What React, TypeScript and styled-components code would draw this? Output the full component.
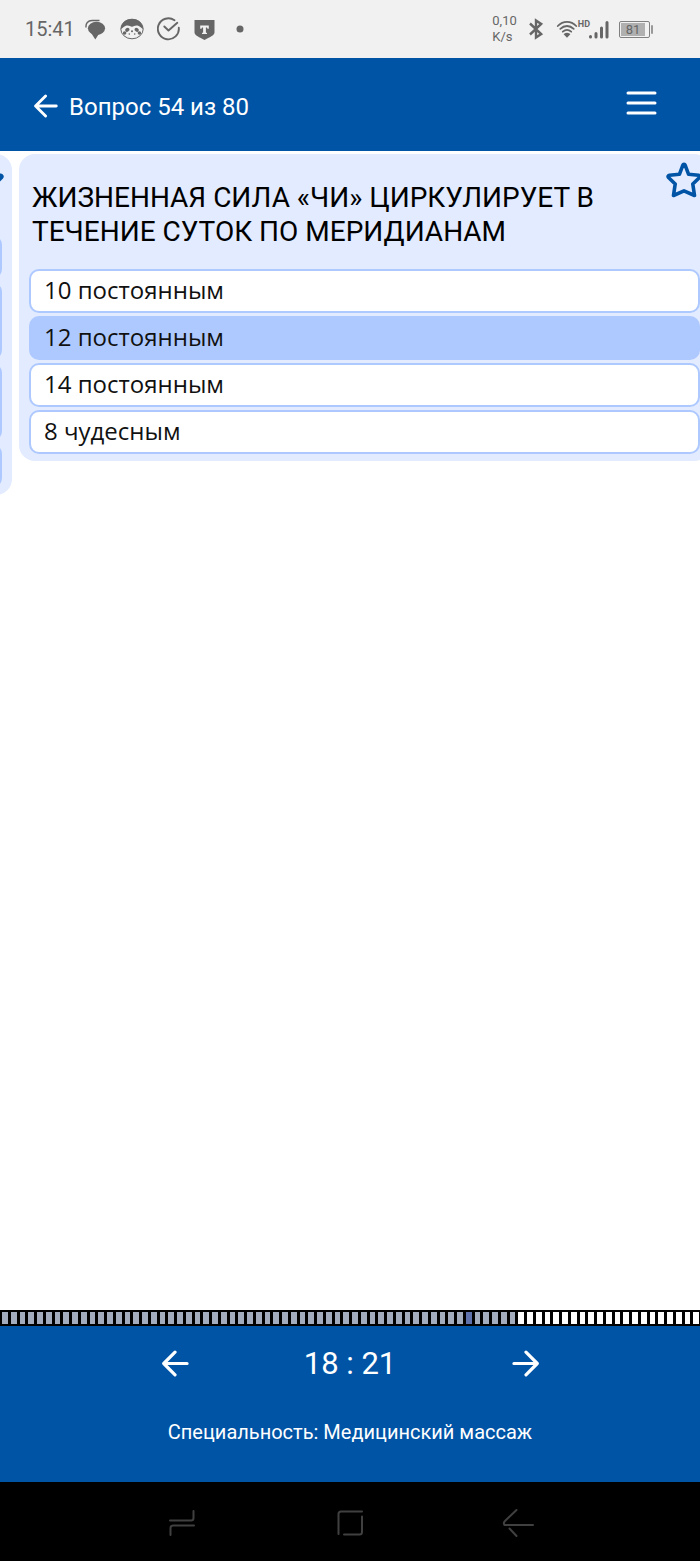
import React, { useState } from "react";
import styled, { createGlobalStyle } from "styled-components";

const BLUE = "#0054a6";
const PALE = "#e2ebff";
const ACCENT = "#aec9ff";
const STATUS = "#666666";

const GlobalStyle = createGlobalStyle`
  * { box-sizing: border-box; }
  body { margin: 0; background: #fff; font-family: Roboto, "Liberation Sans", sans-serif; }
  button { border: 0; padding: 0; background: none; color: inherit; font: inherit; cursor: pointer; }
  svg { display: block; flex: none; }
`;

const Screen = styled.div`
  display: flex;
  flex-direction: column;
  min-height: 100vh;
`;

const StatusBar = styled.div`
  display: flex;
  align-items: center;
  justify-content: space-between;
  height: 58px;
  padding: 0 47px 0 25px;
  background: #f1f1f1;
  color: ${STATUS};
`;

const StatusGroup = styled.div<{ $gap: number }>`
  display: flex;
  align-items: center;
  gap: ${(p) => p.$gap}px;
`;

const Clock = styled.time`
  font-size: 20px;
  line-height: 24px;
  margin-right: -3px;
`;

const NetSpeed = styled.div`
  font-size: 13px;
  line-height: 16px;
`;

const SignalGroup = styled.div`
  display: flex;
  align-items: flex-start;
`;

const HdLabel = styled.span`
  font-size: 9px;
  font-weight: 700;
  line-height: 10px;
`;

const SignalBars = styled.svg`
  margin-left: -2px;
`;

const Battery = styled.div`
  display: flex;
  align-items: center;
  gap: 1px;
`;

const BatteryBody = styled.div`
  width: 31px;
  height: 17px;
  padding: 1px 4px 1px 1px;
  border: 1px solid #808080;
  border-radius: 2px;
`;

const BatteryLevel = styled.div`
  background: #b0b0b0;
  font-size: 13px;
  line-height: 13px;
  text-align: center;
`;

const BatteryTip = styled.div`
  width: 2px;
  height: 9px;
  border-radius: 1px;
  background: #999;
`;

const Header = styled.header`
  display: flex;
  align-items: center;
  justify-content: space-between;
  height: 93px;
  padding: 2px 43px 0 34px;
  background: ${BLUE};
  color: #fff;
`;

const HeaderTitle = styled.div`
  display: flex;
  align-items: center;
  gap: 11px;
`;

const Heading = styled.h1`
  margin: 0;
  padding-top: 2px;
  font-size: 24px;
  font-weight: 400;
  line-height: 32px;
`;

const MenuButton = styled.button`
  padding-bottom: 6px;
`;

const Carousel = styled.main`
  display: flex;
  align-items: flex-start;
  flex: 1;
  gap: 7px;
  padding-top: 3px;
  overflow: hidden;
`;

const Card = styled.section<{ $previous?: boolean }>`
  flex: none;
  width: calc(100% - 9px);
  margin-left: ${(p) => (p.$previous ? "calc(21px - 100%)" : "0")};
  padding: 8px 8px 7px 10px;
  border-radius: 16px;
  background: ${PALE};
`;

const CardHead = styled.div`
  display: flex;
  align-items: flex-start;
  justify-content: space-between;
  gap: 12px;
  padding-left: 3px;
`;

const Question = styled.h2<{ $lines?: number }>`
  flex: 1;
  min-height: ${(p) => (p.$lines ?? 1) * 34}px;
  margin: 19px 0 20px;
  font-size: 28px;
  font-weight: 400;
  line-height: 34px;
  color: #000;
`;

const Answers = styled.div`
  display: flex;
  flex-direction: column;
  gap: 3px;
  padding-right: 2px;
`;

const Answer = styled.label<{ $selected?: boolean; $lines?: number }>`
  display: flex;
  align-items: center;
  min-height: ${(p) => 10 + (p.$lines ?? 1) * 34}px;
  padding: 0 13px 2px;
  border: 2px solid ${ACCENT};
  border-radius: 10px;
  background: ${(p) => (p.$selected ? ACCENT : "#fff")};
  color: #111;
  font-family: "Open Sans", "Noto Sans", sans-serif;
  font-size: 24px;
  line-height: 34px;
  cursor: pointer;
`;

const AnswerRadio = styled.input`
  appearance: none;
  width: 0;
  height: 0;
  margin: 0;
`;

const Progress = styled.div`
  display: flex;
  height: 16px;
  background: #000;
`;

const Segment = styled.span<{ $state: "answered" | "current" | "open" }>`
  flex: 1;
  border: solid #000;
  border-width: 2px 1px 2px 2px;
  background: ${(p) => ({ answered: "#a2acbd", current: "#5f71ab", open: "#fdfdfd" })[p.$state]};
`;

const Footer = styled.footer`
  display: flex;
  flex-direction: column;
  align-items: center;
  gap: 36px;
  height: 156px;
  padding-top: 18px;
  background: ${BLUE};
  color: #fff;
`;

const Pager = styled.div`
  display: grid;
  grid-template-columns: repeat(3, 25%);
  justify-content: center;
  align-items: center;
  justify-items: center;
  width: 100%;
`;

const PagerButton = styled.button`
  padding-bottom: 2px;
`;

const Timer = styled.time`
  font-size: 31px;
  line-height: 40px;
`;

const Specialty = styled.p`
  margin: 0;
  font-size: 20px;
  line-height: 24px;
`;

const SystemNav = styled.nav`
  display: grid;
  grid-template-columns: repeat(3, 24%);
  justify-content: center;
  align-items: center;
  justify-items: center;
  height: 79px;
  padding-top: 2px;
  background: #000;
  color: #404040;
`;

function Arrow({ size, right }: { size: number; right?: boolean }) {
  return (
    <svg width={size} height={size} viewBox="0 0 28 28" fill="none" stroke="currentColor" strokeWidth="3.3" strokeLinecap="round" strokeLinejoin="round">
      <path d={right ? "M2 14H26M14.5 2.3L26.2 14L14.5 25.7" : "M26 14H2M13.5 2.3L1.8 14L13.5 25.7"} />
    </svg>
  );
}

function Star() {
  return (
    <svg width="36" height="36" viewBox="0 0 36 36" fill="none" stroke={BLUE} strokeWidth="3.6" strokeLinejoin="round">
      <path d="M18 2.3Q19 2.300 19.500 4.200L22.600 12.300L32.500 13.300Q34.800 14 33.500 15.500L26.800 22L28.500 33.500L18 28.900L7.500 33.500L9.200 22L2.500 15.500Q1.200 14 3.500 13.300L13.400 12.300L16.500 4.200Q17 2.300 18 2.300Z" />
    </svg>
  );
}

const options = ["10 постоянным", "12 постоянным", "14 постоянным", "8 чудесным"];
const previousOptionLines = [1, 2, 2, 1];

export default function App() {
  const [selected, setSelected] = useState(1);

  return (
    <Screen>
      <GlobalStyle />
      <StatusBar>
        <StatusGroup $gap={13}>
          <Clock>15:41</Clock>
          <svg width="22" height="22" viewBox="0 0 22 22" fill={STATUS}>
            <ellipse cx="11.500" cy="10.300" rx="8.600" ry="6.600" />
            <path d="M5.500 14L10.300 21.500L14.500 15Z" />
            <path d="M1 9.500C.6 5.500 2.800 2.500 7 2.500H14.500" fill="none" stroke={STATUS} strokeWidth="1.400" />
          </svg>
          <svg width="24" height="22" viewBox="0 0 24 22">
            <ellipse cx="12" cy="11" rx="11.200" ry="9.800" fill="#f1f1f1" stroke={STATUS} strokeWidth="1" />
            <path d="M1 11C1 5 5.500 1 12 1S23 5 23 11C21.500 10.500 20 8.300 17.500 7.600C15 7 13.700 8.700 12 8.700S9 7 6.500 7.600C4 8.300 2.500 10.500 1 11Z" fill={STATUS} />
            <g fill={STATUS}>
              <ellipse cx="7.300" cy="11.800" rx="2.300" ry="1.900" transform="rotate(-35 7.300 11.800)" />
              <ellipse cx="16.700" cy="11.800" rx="2.300" ry="1.900" transform="rotate(35 16.700 11.800)" />
              <circle cx="4.600" cy="15" r="1.800" />
              <circle cx="19.400" cy="15" r="1.800" />
              <circle cx="12" cy="13.200" r="1" />
              <circle cx="9.300" cy="16" r=".8" />
              <circle cx="14.700" cy="16" r=".8" />
            </g>
          </svg>
          <svg width="24" height="24" viewBox="0 0 24 24" fill="none" stroke={STATUS} strokeWidth="1.900" strokeLinecap="round" strokeLinejoin="round">
            <path d="M17.500 3.300A10.500 10.500 0 1 0 21.800 10.800" />
            <path d="M7.300 9.500L11.500 13.500L20.300 5.800" />
          </svg>
          <svg width="22" height="22" viewBox="0 0 22 22">
            <path d="M.5 2H20.500V14.500C20.500 17.500 15.500 19.300 10.500 22C5.500 19.300 .5 17.500 .5 14.500Z" fill={STATUS} />
            <path d="M6.200 7.500H14.800V10.800H13.500L13 9.500H11.900V14.500L13 15V16H8V15L9.100 14.500V9.500H8L7.500 10.800H6.200Z" fill="#f1f1f1" />
          </svg>
          <svg width="22" height="8" viewBox="0 0 22 8">
            <circle cx="11" cy="4" r="3.500" fill={STATUS} />
          </svg>
        </StatusGroup>
        <StatusGroup $gap={9}>
          <NetSpeed>
            0,10
            <br />
            K/s
          </NetSpeed>
          <svg width="21" height="22" viewBox="0 0 21 22" fill="none" stroke={STATUS} strokeWidth="2.400" strokeLinejoin="miter">
            <path d="M4 5.500L15.200 16L10 19.500V2.500L15.200 6L4 16.500" />
          </svg>
          <SignalGroup>
            <svg width="22" height="20" viewBox="0 0 22 20" fill="none" stroke={STATUS} strokeWidth="1.800" strokeLinecap="round">
              <path d="M1.800 7C7 1.500 15 1.500 20.200 7M4.300 9.900C8.300 6 13.700 6 17.700 9.900M6.800 12.700C9.500 10.300 12.500 10.300 15.200 12.700" />
              <path d="M9 15.300Q11 13.900 13 15.300L11 17.500Z" fill={STATUS} />
            </svg>
            <HdLabel>HD</HdLabel>
            <SignalBars width="22" height="20" viewBox="0 0 22 20" stroke={STATUS} strokeWidth="3" strokeLinecap="round">
              <path d="M2.500 17.500V18M8 14.500V18M13.500 9V18M19 3.500V18" />
            </SignalBars>
          </SignalGroup>
          <Battery>
            <BatteryBody>
              <BatteryLevel>81</BatteryLevel>
            </BatteryBody>
            <BatteryTip />
          </Battery>
        </StatusGroup>
      </StatusBar>

      <Header>
        <HeaderTitle>
          <button type="button" aria-label="Назад">
            <Arrow size={24} />
          </button>
          <Heading>Вопрос 54 из 80</Heading>
        </HeaderTitle>
        <MenuButton type="button" aria-label="Меню">
          <svg width="31" height="24" viewBox="0 0 31 24" stroke="#fff" strokeWidth="3" strokeLinecap="round">
            <path d="M2 2H29M2 12H29M2 22H29" />
          </svg>
        </MenuButton>
      </Header>

      <Carousel>
        <Card $previous aria-hidden="true">
          <CardHead>
            <Question as="div" $lines={1} />
            <Star />
          </CardHead>
          <Answers>
            {previousOptionLines.map((lines, i) => (
              <Answer as="div" key={i} $lines={lines} />
            ))}
          </Answers>
        </Card>
        <Card>
          <CardHead>
            <Question id="question" $lines={2}>
              ЖИЗНЕННАЯ СИЛА «ЧИ» ЦИРКУЛИРУЕТ В ТЕЧЕНИЕ СУТОК ПО МЕРИДИАНАМ
            </Question>
            <button type="button" aria-label="В избранное">
              <Star />
            </button>
          </CardHead>
          <Answers role="radiogroup" aria-labelledby="question">
            {options.map((text, i) => (
              <Answer key={text} $selected={i === selected}>
                <AnswerRadio type="radio" name="answer" checked={i === selected} onChange={() => setSelected(i)} />
                {text}
              </Answer>
            ))}
          </Answers>
        </Card>
      </Carousel>

      <Progress role="progressbar" aria-label="Отвечено вопросов" aria-valuemin={0} aria-valuemax={80} aria-valuenow={59}>
        {Array.from({ length: 80 }, (_, i) => (
          <Segment key={i} $state={i === 53 ? "current" : i < 59 ? "answered" : "open"} />
        ))}
      </Progress>

      <Footer>
        <Pager>
          <PagerButton type="button" aria-label="Предыдущий вопрос">
            <Arrow size={27} />
          </PagerButton>
          <Timer>18 : 21</Timer>
          <PagerButton type="button" aria-label="Следующий вопрос">
            <Arrow size={27} right />
          </PagerButton>
        </Pager>
        <Specialty>Специальность: Медицинский массаж</Specialty>
      </Footer>

      <SystemNav>
        <button type="button" aria-label="Недавние">
          <svg width="28" height="28" viewBox="0 0 28 28" fill="none" stroke="currentColor" strokeWidth="2" strokeLinecap="round">
            <path d="M2 11.500H23Q25.500 11.500 25.500 9V2M26 16.500H5Q2.500 16.500 2.500 19V26" />
          </svg>
        </button>
        <button type="button" aria-label="Домой">
          <svg width="28" height="28" viewBox="0 0 28 28" fill="none" stroke="currentColor" strokeWidth="2" strokeLinecap="round">
            <path d="M2.500 25V5Q2.500 2.500 5 2.500H26M26 7.500V23Q26 25.500 23.500 25.500H8" />
          </svg>
        </button>
        <button type="button" aria-label="Назад в системе">
          <svg width="32" height="30" viewBox="0 0 32 30" fill="none" stroke="currentColor" strokeWidth="2" strokeLinecap="round">
            <path d="M14.500 2L3 13Q1 15 2.500 17H31M7.500 20.500L14.500 28" />
          </svg>
        </button>
      </SystemNav>
    </Screen>
  );
}
